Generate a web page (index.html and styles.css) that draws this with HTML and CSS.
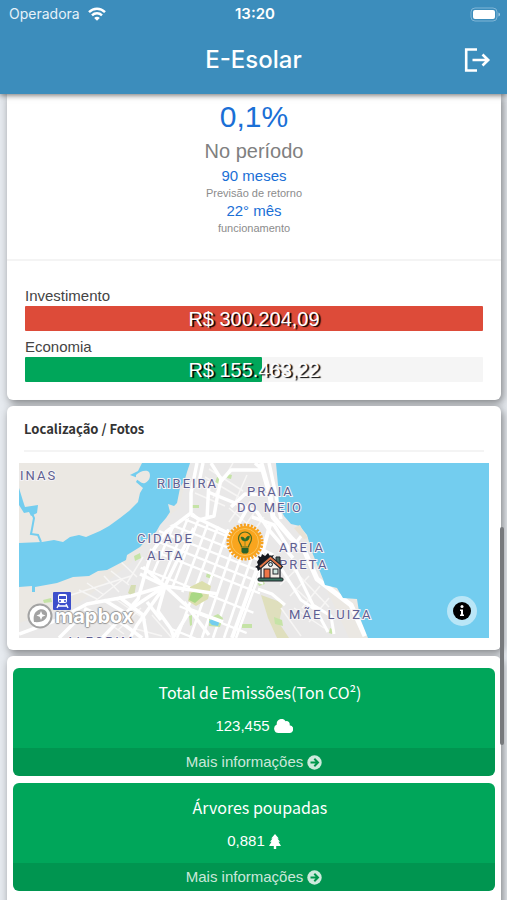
FILE: index.html
```html
<!DOCTYPE html>
<html lang="pt-BR">
<head>
    <meta charset="UTF-8">
    <meta name="viewport" content="width=device-width, initial-scale=1.0">
    <title>E-Esolar</title>
    <link rel="stylesheet" href="styles.css">
</head>
<body>
    <header class="app-header">
        <div class="status-bar">
            <div class="carrier">
                <span>Operadora</span>
                <svg width="18" height="14" viewBox="0 0 18 14" fill="none" stroke="#fff" stroke-width="2.4" aria-hidden="true">
                    <path d="M1 5.2C5.5.6 12.500.6 17 5.200"/>
                    <path d="M4 8.400c2.800-2.800 7.200-2.800 10 0"/>
                    <path d="M9 13.800L6.200 10.900c1.600-1.400 4-1.400 5.600 0z" fill="#fff" stroke="none"/>
                </svg>
            </div>
            <time class="clock">13:20</time>
            <svg class="battery" width="31" height="15" viewBox="0 0 31 15" aria-hidden="true">
                <rect x="1" y="1" width="26" height="13" rx="4" fill="none" stroke="#7fb5d6"/>
                <rect x="3" y="3" width="22" height="9" rx="2" fill="#fff"/>
                <path d="M28.500 5.500c2 .8 2 3.200 0 4z" fill="#a5cde4"/>
            </svg>
        </div>
        <div class="title-bar">
            <h1>E-Esolar</h1>
            <button class="logout" type="button" aria-label="Sair">
                <svg width="28" height="26" viewBox="0 0 28 26" fill="none" stroke="#fff" stroke-width="2.600">
                    <path d="M14 2.500H3.200v21H14"/>
                    <path d="M9.500 13H25M19.500 7.500L25.200 13l-5.700 5.500"/>
                </svg>
            </button>
        </div>
    </header>

    <main class="content">
        <section class="card card-first">
            <div class="summary">
                <p class="percent">0,1%</p>
                <p class="period">No período</p>
                <p class="value">90 meses</p>
                <p class="caption">Previsão de retorno</p>
                <p class="value">22° mês</p>
                <p class="caption">funcionamento</p>
            </div>
            <div class="bars">
                <div class="bar-label">Investimento</div>
                <div class="bar">
                    <div class="bar-fill red" style="width: 100%"></div>
                    <span class="bar-text">R$ 300.204,09</span>
                </div>
                <div class="bar-label">Economia</div>
                <div class="bar">
                    <div class="bar-fill green" style="width: 51.8%"></div>
                    <span class="bar-text">R$ 155.463,22</span>
                </div>
            </div>
        </section>

        <section class="card">
            <h2 class="card-title">Localização / Fotos</h2>
            <div class="map">
                <svg class="map-canvas" viewBox="0 0 470 175" preserveAspectRatio="xMidYMid slice" role="img" aria-label="Mapa">
                    <defs>
                        <clipPath id="grid-area">
                            <path d="M170 55L240 75 252 97 226 175H150L165 130 146 120 120 108 141 66z"/>
                        </clipPath>
                    </defs>
                    <rect width="470" height="175" fill="#ebe8e3"/>
                    <!-- city ground -->
                    <path d="M171 0H257L262 30 300 110 330 175H0V160L60 140 112 100 141 60 160 45z" fill="#e9e8e8"/>

                    <!-- parks -->
                    <g fill="#c5e3a6">
                        <path d="M115 93l6-3 1 5-6 3zM24 137l8-2 1 4-8 1zM198 14l3 1-1 7-4-2zM209 11l4 1-1 4-4-1z"/>
                        <path d="M173 42h7v3h-7zM223 161h10v4h-10zM238 119l6-2 2 4-6 2zM188 109l7 3-2 4-6-2zM170 153l3-1v10l-2 1z"/>
                        <path d="M242 132l22 8-4 20 10 15h-12l-9-20z" fill="#dfdfbd"/>
                        <path d="M255 154l8 3 1 6-8-2zM311 165l4 2-2 4-3-1z"/>
                        <path d="M112 122h5l-2 12-6-4z" fill="#d5ddb3"/>
                    </g>

                    <!-- minor streets -->
                    <g fill="none" stroke="#f7f6f5" stroke-width="1.500">
                        <path d="M60 127l18 9M68 120l17 12M85 113l15 16M92 108l18 14M52 132l60-19M75 139l28-22M102 99l16 15M124 94l-16 26"/>
                        <path d="M265 115l35 32M272 104l38 40M280 104l-19 18M290 113l-19 20M301 123l-18 22M310 135l-20 24M275 145l30 20M262 145l20 28"/>
                        <path d="M190 6l34 22M186 14l34 20M214 0l-20 35M228 12l-12 27M176 30l30 13M210 45l28 24M223 40l-13 19M235 50l-12 17M245 54l-12 17"/>
                        <path d="M50 150l60 10M65 143l40 28M95 135l32 22M122 145l-23 22M133 152l20 23M117 166l26 7"/>
                    </g>

                    <!-- street grid -->
                    <g clip-path="url(#grid-area)" fill="none" stroke="#fff">
                        <path stroke-width="2.600" d="M160 50L106 175M171 50L120 175M182 50L134 175M193 50L146 175M204 50L158 175M215 50L171 175M226 50L183 175M237 50L194 175M248 50L205 175M259 60L217 175"/>
                        <path stroke-width="2.200" d="M120 38L270 98M120 49L270 109M120 60L270 120M120 71L270 131M120 82L270 142M120 104L270 164M120 127L270 187M120 153L270 213"/>
                    </g>

                    <!-- large green blocks inside the grid -->
                    <path d="M171 124l12-6 9 5-3 13-12 7-8-5z" fill="#dcdfae"/>
                    <path d="M172 130l9-3 3 6-8 7-6-3z" fill="#a9d884"/>
                    <path d="M190 155l9-4 5 4-3 9-11-1z" fill="#c5e3a6"/>
                    <path d="M190 159l3-4 4 3 4-1-2 6-6-1z" fill="#72cdef"/>

                    <!-- avenues -->
                    <g fill="none" stroke="#fff" stroke-width="3.500" stroke-linejoin="round">
                        <path d="M178 0L172 30v20l8 7 15-4 4-23 3-14-10-16M184 0l-5 24M190 18l-2 38"/>
                        <path d="M172 50l-25 19-14 20-7 22-7 25-8 9"/>
                        <path d="M172 52L254 92M189 29l49 20 12 18 24 28M202 18l10-11h32l-8-7"/>
                        <path d="M242 0l9 32 3 22 18 21 14 14 12 27 34 26 14 31" stroke-width="5"/>
                        <path d="M250 0l6 28 6 28M212 44l14-13 25 1M220 60l12-21M233 54l22 8 17 27"/>
                        <path d="M251 62l-10 36-28 77" stroke-width="4"/>
                        <path d="M0 171l38-14 30-16 44-8 34-10 12-25 17-33"/>
                        <path d="M146 123L110 147 83 175M146 123L124 104M146 123l-25-12M146 123l53 8M146 123l26 24 32 12M146 123l-28 39-7 13M146 123l-7 25 13 18 3 9"/>
                        <path d="M65 146l38 14 20 15M85 137l25 15M100 134l24 18 4 23M40 175l15-15 20-6M128 139l14 18M165 139l25 33M169 151l-15 24"/>
                        <path d="M239 126l14 5 13 11M262 105l20 32 15 10 12 22M274 101l20 41 18 11 3 18M283 72l-11 14" stroke-width="3"/>
                    </g>

                    <!-- river and sea -->
                    <g fill="#73cdef">
                        <path d="M123 0H171L168 9 166 16 161 25 158 40 155 43 149 41 151 49 147 55 141 62 137 69 130 74 121 84 108 92 107 97 88 107 79 108 70 113 54 114 38 120 16 124V129H13V123L0 124V80L23 79 35 77 44 79 51 74 60 72 67 74 81 68 90 63 101 55 110 48 119 39 121 30 124 25 117 19 119 15 111 12 119 8z"/>
                        <path d="M0 25l4 13 2 6 13-2-1 8-6 3-2-4-5 1-5-8z"/>
                        <path d="M257 0H470V175H349L341 155 338 136 324 135 318 125 306 122 304 116 293 89 288 72 284 67 281 63 272 61 265 53 260 43 259 22z"/>
                    </g>
                    <path d="M12 48l3 7-2 11-1 5 7 1 3 7" fill="none" stroke="#73cdef" stroke-width="2"/>
                    <path d="M117 12c3-3 10-6 13-3 2 3 1 9-4 11-4 1-5-2-9-4z" fill="#ebe8e3"/>
                    <path d="M275 65l6-3 3 6 5 7-4 1-5-5z" fill="#e9e2d5"/>

                    <g class="map-labels">
                        <text x="1" y="17">INAS</text>
                        <text x="138" y="25">RIBEIRA</text>
                        <text x="228" y="33">PRAIA</text>
                        <text x="218" y="49">DO MEIO</text>
                        <text x="118" y="80">CIDADE</text>
                        <text x="128" y="97">ALTA</text>
                        <text x="260" y="89">AREIA</text>
                        <text x="260" y="106">PRETA</text>
                        <text x="270" y="156">MÃE LUIZA</text>
                        <text x="47" y="183">ALECRIM</text>
                    </g>

                    <!-- train station -->
                    <g transform="translate(34 129)">
                        <rect width="18" height="18" rx="1" fill="#3d4fcb"/>
                        <rect x="5" y="2" width="9" height="9" rx="2" fill="#fff"/>
                        <rect x="6" y="4" width="7" height="3" fill="#3d4fcb"/>
                        <circle cx="7" cy="9" r="1" fill="#3d4fcb"/>
                        <circle cx="12" cy="9" r="1" fill="#3d4fcb"/>
                        <path d="M6 12l-2 4M13 12l2 4M5 14h9" stroke="#fff" stroke-width="1.400"/>
                    </g>

                    <!-- solar plant marker -->
                    <g transform="translate(226 79)">
                        <circle r="17" fill="none" stroke="#f7a01c" stroke-width="3" stroke-dasharray="2.200 1.360"/>
                        <circle r="16" fill="#f9a51e"/>
                        <circle r="13.500" fill="none" stroke="#fbc45c"/>
                        <path d="M-3.500 5c0-3-3-4-3-8.500a6.500 6.500 0 0 1 13 0c0 4.500-3 5.500-3 8.500z" fill="none" stroke="#4b6b1d" stroke-width="1.200"/>
                        <path d="M0 4v-5M0-1c-3 0-4-2-4-4 3 0 4 1 4 4zM0-1c0-3 2-5 4.500-5 0 3-1.500 5-4.500 5z" fill="#276c2b" stroke="#276c2b" stroke-width=".5"/>
                        <path d="M-3.500 6h7v4l-1.500 1.500h-4L-3.500 10z" fill="#27622b"/>
                    </g>

                    <!-- house marker -->
                    <g transform="translate(238 91)">
                        <path d="M0 8l2-3-1-3 3 1 1-3 3 2 3-3 2 3 4-1-5 7-11 9-1-3-2-1 3-2z" fill="#17191f"/>
                        <path d="M4 13l9-8 10 8v13H4z" fill="#f4eee8" stroke="#20242b" stroke-width="1.300"/>
                        <path d="M19 3h4v8l-4-4z" fill="#47605a" stroke="#20242b"/>
                        <path d="M2 14L13.500 4 25 14" fill="none" stroke="#20242b" stroke-width="4"/>
                        <path d="M3 13L13.500 4 24 13" fill="none" stroke="#e27445" stroke-width="1.800"/>
                        <circle cx="13.500" cy="10.500" r="2" fill="#cfe2e6" stroke="#20242b"/>
                        <rect x="7" y="15" width="6" height="10" fill="#ed7546" stroke="#20242b"/>
                        <rect x="16" y="15" width="5" height="5" fill="#cfe5df" stroke="#20242b"/>
                        <rect x="1" y="24" width="25" height="3" rx="1" fill="#397461" stroke="#20242b"/>
                    </g>
                </svg>
                <a class="map-logo" href="#mapbox">
                    <svg width="26" height="26" viewBox="0 0 26 26" aria-hidden="true">
                        <circle cx="13" cy="13" r="11.500" fill="#fff" stroke="#a3a3a3" stroke-width="2"/>
                        <path d="M7 19c-1-5 0-9 3-11 3-3 9-2 10 2 1 6-4 10-13 9z" fill="#a3a3a3"/>
                        <path d="M14 8l1.300 3.200 3.200 1.300-3.200 1.300L14 17l-1.300-3.200-3.200-1.300 3.200-1.300z" fill="#fff"/>
                    </svg>
                    <span>mapbox</span>
                </a>
                <button class="map-info" type="button" aria-label="Informações do mapa">
                    <svg width="20" height="20" viewBox="0 0 20 20">
                        <circle cx="10" cy="10" r="9" fill="#000"/>
                        <circle cx="10" cy="5.500" r="1.500" fill="#fff"/>
                        <path d="M8 8.500h3v5h1V15H8v-1.500h1V10H8z" fill="#fff"/>
                    </svg>
                </button>
            </div>
        </section>

        <section class="card card-stats">
            <article class="small-box">
                <div class="inner">
                    <h3>Total de Emissões(Ton CO²)</h3>
                    <p>
                        123,455
                        <svg width="19" height="14" viewBox="0 0 19 14" fill="#fff" aria-hidden="true">
                            <path d="M4.500 14A4.500 4.500 0 0 1 2.800 5.400 4.800 4.800 0 0 1 11.600 2.200 3.200 3.200 0 0 1 15.600 6.200 3.900 3.900 0 0 1 15 14z"/>
                        </svg>
                    </p>
                </div>
                <a class="small-box-footer" href="#emissoes">
                    Mais informações
                    <svg width="15" height="15" viewBox="0 0 15 15" aria-hidden="true">
                        <circle cx="7.500" cy="7.500" r="7.200" fill="currentColor"/>
                        <path d="M3.500 7.500h7M7.300 3.800L11 7.500l-3.700 3.700" fill="none" stroke="#00964c" stroke-width="2"/>
                    </svg>
                </a>
            </article>
            <article class="small-box">
                <div class="inner">
                    <h3>Árvores poupadas</h3>
                    <p>
                        0,881
                        <svg width="12" height="15" viewBox="0 0 12 15" fill="#fff" aria-hidden="true">
                            <path d="M6 0l3.800 4.500H8.500l2.500 3.300H9.500L12 12H7.200v3H4.800v-3H0l2.500-4.200H1l2.500-3.300H2.200z"/>
                        </svg>
                    </p>
                </div>
                <a class="small-box-footer" href="#arvores">
                    Mais informações
                    <svg width="15" height="15" viewBox="0 0 15 15" aria-hidden="true">
                        <circle cx="7.500" cy="7.500" r="7.200" fill="currentColor"/>
                        <path d="M3.500 7.500h7M7.300 3.800L11 7.500l-3.700 3.700" fill="none" stroke="#00964c" stroke-width="2"/>
                    </svg>
                </a>
            </article>
        </section>
    </main>
    <div class="scroll-thumb"></div>
</body>
</html>
```
FILE: styles.css
```css
* {
    box-sizing: border-box;
}

body {
    margin: 0;
    height: 100vh;
    display: flex;
    flex-direction: column;
    font-family: "Liberation Sans", Arial, sans-serif;
    font-size: 15px;
    line-height: 20px;
    color: #444;
    background-color: #e6eaef;
}

h1, h2, h3, p {
    margin: 0;
    font-weight: normal;
}

button {
    border: 0;
    padding: 0;
    background: none;
    cursor: pointer;
}

svg {
    display: block;
}

/* Header */
.app-header {
    flex: none;
    background-color: #3c8dbc;
    color: #fff;
    font-family: Inter, sans-serif;
    position: relative; /* keeps the shadow above the cards */
    z-index: 2;
    box-shadow: 0 1px 6px rgba(0, 0, 0, 0.6);
}

.status-bar,
.title-bar {
    display: grid;
    grid-template-columns: 1fr auto 1fr;
    align-items: center;
}

.status-bar {
    height: 28px;
    padding: 0 6px 0 9px;
    font-size: 14px;
}

.carrier {
    display: flex;
    align-items: center;
    gap: 8px;
    color: #e6f2f9;
}

.clock {
    font-size: 15px;
    font-weight: 600;
}

.battery {
    justify-self: end;
}

.title-bar {
    height: 66px;
    padding: 0 16px 2px;
}

.title-bar h1 {
    grid-column: 2;
    font-size: 24px;
    line-height: 32px;
    font-weight: 500;
}

.logout {
    justify-self: end;
}

/* Cards */
.content {
    flex: 1;
    min-height: 0;
    overflow-y: auto;
    scrollbar-width: none;
    padding: 0 6px 0 7px;
}

.card {
    background-color: #fff;
    border-radius: 6px;
    margin-bottom: 6px;
    box-shadow: 2px 3px 8px rgba(0, 0, 0, 0.45);
}

.card-first {
    border-radius: 0 0 6px 6px;
}

.summary {
    padding: 4px 0 22px;
    text-align: center;
    border-bottom: 2px solid #f4f4f4;
}

.percent {
    font-size: 30px;
    line-height: 37px;
    color: #1a6fd6;
}

.period {
    font-size: 20px;
    line-height: 32px;
    color: #808080;
}

.value {
    line-height: 17px;
    color: #1a6fd6;
}

.caption {
    font-size: 11px;
    line-height: 18px;
    color: #8c8c8c;
}

.bars {
    padding: 25px 18px 18px;
}

.bar-label {
    line-height: 20px;
}

.bar {
    position: relative;
    height: 25px;
    margin-bottom: 6px;
    background-color: #f5f5f5;
    border-radius: 1px;
}

.bar:last-child {
    margin-bottom: 0;
}

.bar-fill {
    height: 100%;
    border-radius: 1px;
}

.red {
    background-color: #dd4b39;
}

.green {
    background-color: #00a65a;
}

/* Value sits over the fill */
.bar-text {
    position: absolute;
    inset: 0;
    font-size: 20px;
    line-height: 27px;
    text-align: center;
    color: #fff;
    text-shadow: 2px 1px 1px #000;
}

/* Map */
.card-title {
    margin: 0 17px;
    padding: 13px 0 11px;
    border-bottom: 2px solid #f4f4f4;
    font-family: "Noto Sans CJK SC", "Open Sans", sans-serif;
    font-size: 13px;
    line-height: 20px;
    font-weight: bold;
    color: #333;
}

.map {
    position: relative;
    padding: 11px 12px 12px;
}

.map-canvas {
    width: 100%;
    height: auto;
}

.map-labels {
    font-family: Roboto, sans-serif;
    font-size: 13px;
    letter-spacing: 2px;
    fill: #5f5f92;
    stroke: #f5f3f5;
    stroke-width: 2px;
    paint-order: stroke;
}

.map-logo {
    position: absolute;
    left: 20px;
    bottom: 21px;
    display: flex;
    align-items: center;
    gap: 2px;
    font-family: Inter, sans-serif;
    font-size: 20px;
    font-weight: bold;
    color: #fff;
    text-decoration: none;
    text-shadow: 1px 0 1px #999, -1px 0 1px #999, 0 1px 1px #999, 0 -1px 1px #999;
}

.map-info {
    position: absolute;
    right: 24px;
    bottom: 24px;
    width: 30px;
    height: 30px;
    display: grid;
    place-items: center;
    border-radius: 50%;
    background-color: rgba(255, 255, 255, 0.5);
}

/* Green boxes */
.card-stats {
    display: grid;
    gap: 7px;
    padding: 12px 6px 24px;
    margin-bottom: 0;
}

.small-box {
    overflow: hidden;
    border-radius: 6px;
    background-color: #00a65a;
    color: #fff;
    text-align: center;
}

.small-box .inner {
    padding: 12px 0;
}

.small-box h3 {
    padding-left: 12px;
    font-family: "Noto Sans CJK SC", "Open Sans", sans-serif;
    font-size: 16px;
    line-height: 24px;
}

.small-box p {
    display: flex;
    justify-content: center;
    align-items: center;
    gap: 4px;
    line-height: 20px;
    padding-top: 12px;
}

.small-box-footer {
    display: flex;
    justify-content: center;
    align-items: center;
    gap: 4px;
    line-height: 28px;
    background-color: rgba(0, 0, 0, 0.1);
    color: rgba(255, 255, 255, 0.8);
    text-decoration: none;
}

.scroll-thumb {
    position: fixed;
    z-index: 3;
    top: 527px;
    right: 3px;
    width: 4px;
    height: 218px;
    border-radius: 2px;
    background-color: #77797c;
}
```
